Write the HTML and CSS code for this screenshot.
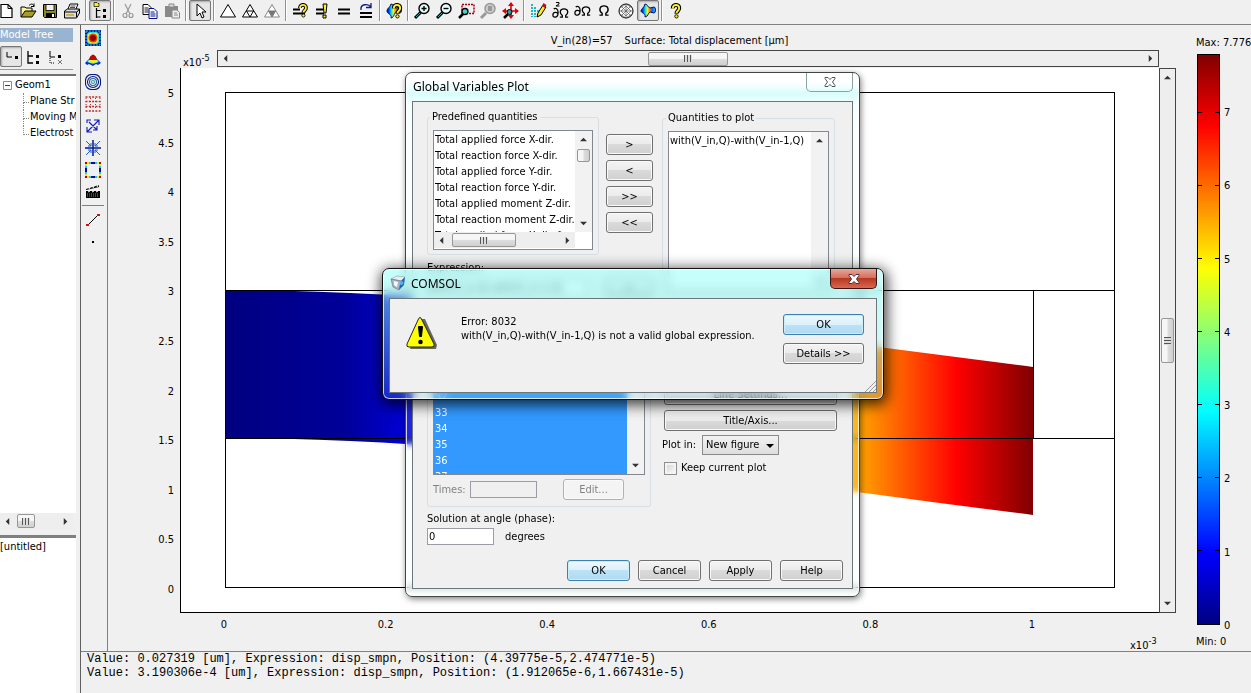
FILE: index.html
```html
<!DOCTYPE html>
<html lang="en">
<head>
<meta charset="utf-8">
<title>COMSOL Multiphysics</title>
<link rel="stylesheet" href="styles.css">
</head>
<body>
<svg class="defs" width="0" height="0" aria-hidden="true">
  <defs>
    <linearGradient id="jet-v" x1="0" y1="1" x2="0" y2="0">
      <stop offset="0" stop-color="#000080"/><stop offset=".125" stop-color="#0000ff"/><stop offset=".375" stop-color="#00ffff"/><stop offset=".625" stop-color="#ffff00"/><stop offset=".875" stop-color="#ff0000"/><stop offset="1" stop-color="#800000"/>
    </linearGradient>
    <linearGradient id="jet-beam">
      <stop offset="0" stop-color="#000080"/><stop offset=".15" stop-color="#00009a"/><stop offset=".275" stop-color="#0000ff"/><stop offset=".517" stop-color="#00ffff"/><stop offset=".717" stop-color="#ffff00"/><stop offset=".906" stop-color="#ff0000"/><stop offset="1" stop-color="#800000"/>
    </linearGradient>
    <linearGradient id="jet-blob">
      <stop offset="0" stop-color="#000090"/><stop offset=".15" stop-color="#0050ff"/><stop offset=".3" stop-color="#00e8ff"/><stop offset=".45" stop-color="#fff000"/><stop offset=".6" stop-color="#ff8000"/><stop offset=".75" stop-color="#0060ff"/><stop offset="1" stop-color="#40b0ff"/>
    </linearGradient>
    <symbol id="left" viewBox="0 0 8 8"><path d="M6 0v8L2 4z"/></symbol>
    <symbol id="right" viewBox="0 0 8 8"><path d="M2 0v8l4-4z"/></symbol>
    <symbol id="up" viewBox="0 0 8 8"><path d="M0 6h8L4 2z"/></symbol>
    <symbol id="down" viewBox="0 0 8 8"><path d="M0 2h8L4 6z"/></symbol>
    <symbol id="quest" viewBox="0 0 12 18"><path d="M2.500 6C2 1 10 1 9.500 6c0 3-3 3-3 6" fill="none" stroke="#000" stroke-width="4.600"/><path d="M2.500 6C2 1 10 1 9.500 6c0 3-3 3-3 5.500" fill="none" stroke="#ffee20" stroke-width="2.200"/><circle cx="6.500" cy="15" r="1.900" fill="#ffee20" stroke="#000"/></symbol>
    <symbol id="lens" viewBox="0 0 20 20"><circle cx="12" cy="7.500" r="5" fill="#e4ffff" stroke="#000" stroke-width="1.400"/><path d="M8.500 11.500L3 17" stroke="#000" stroke-width="3"/><path d="M8 12l-4 4" stroke="#3aa" stroke-width="1"/></symbol>
    <symbol id="omega" viewBox="0 0 12 12"><path d="M1 11h3V9C0 6 1 1 6 1s6 5 2 8v2h3" fill="none" stroke="#000" stroke-width="1.500"/></symbol>
    <symbol id="partial" viewBox="0 0 8 12"><path d="M2 2c2-2 5 0 5 4 0 7-6 6-6 3 0-4 5-4 6-1" fill="none" stroke="#000" stroke-width="1.400"/></symbol>
  </defs>
</svg>

<div class="app">
  <header class="toolbar" role="toolbar" aria-label="Main toolbar">
    <button class="tool" aria-label="New"><svg viewBox="0 0 20 20"><path d="M5 3.500h7l4 4v9H5z" fill="#fff" stroke="#000" stroke-width="1.200"/><path d="M12 3.500v4h4" fill="none" stroke="#000"/></svg></button>
    <button class="tool" aria-label="Open"><svg viewBox="0 0 20 20"><path d="M3 16V6h4l1 1h6v3" fill="#fff799" stroke="#000"/><path d="M3 16l4-6h11l-4 6z" fill="#a89c28" stroke="#000"/><path d="M11 4.500c2-2 4-2 5 1m0-3v3h-3" fill="none" stroke="#000"/></svg></button>
    <button class="tool" aria-label="Save"><svg viewBox="0 0 20 20"><path d="M3.500 3.500h13v13h-12l-1-1z" fill="#8a8620" stroke="#000"/><path d="M6 3.500h8v6H6z" fill="#f2f2f2" stroke="#000" stroke-width=".8"/><path d="M6 12h9v4.500H6z"/><path d="M12 13h2v3h-2z" fill="#fff"/></svg></button>
    <button class="tool" aria-label="Print"><svg viewBox="0 0 20 20"><path d="M6 8l2-5h8l-2 5" fill="#fff" stroke="#000"/><path d="M8.500 5h5M8 6.500h5" stroke="#000" stroke-width=".7"/><path d="M2.500 10l3-2h12v4l-3 5h-12z" fill="#ddd" stroke="#000"/><path d="M2.500 11h12v5M15 11l2.500-3" fill="none" stroke="#000"/><path d="M4 14h8" stroke="#bba820" stroke-width="1.500"/></svg></button>
    <span class="sep"></span>
    <button class="tool pressed" aria-label="Model tree" aria-pressed="true"><svg viewBox="0 0 20 20"><path d="M4 1.500h3l1 1h1v3H4z" fill="#ffee20" stroke="#000" stroke-width=".7"/><path d="M6.500 7v10M6.500 9.500h4M6.500 16h4" fill="none" stroke="#000" stroke-width="1.200"/><path d="M13 8h3v3h-3zM13 14h3v3h-3z"/></svg></button>
    <span class="sep"></span>
    <button class="tool" aria-label="Cut" disabled><svg viewBox="0 0 20 20" fill="none" stroke="#999" stroke-width="1.200"><path d="M7 3l5 10M13 3L8 13"/><circle cx="7" cy="14.500" r="2"/><circle cx="13" cy="14.500" r="2"/></svg></button>
    <button class="tool" aria-label="Copy"><svg viewBox="0 0 20 20"><path d="M3 3.500h5l3 3v7H3z" fill="#fff" stroke="#000"/><path d="M4.500 7h4M4.500 9h4M4.500 11h4" stroke="#222"/><path d="M9 7.500h5l3 3v7H9z" fill="#fff" stroke="#001090"/><path d="M10.500 11h4M10.500 13h5M10.500 15h5" stroke="#001090"/></svg></button>
    <button class="tool" aria-label="Paste" disabled><svg viewBox="0 0 20 20"><path d="M3 5h13v11H3z" fill="#888"/><path d="M7 3h5v3H7z" fill="#ddd" stroke="#888"/><path d="M10 9h5l2.500 2.500V17H10z" fill="#eee" stroke="#888"/><path d="M12 12h3M12 14h4" stroke="#888"/></svg></button>
    <span class="sep"></span>
    <button class="tool pressed" aria-label="Select" aria-pressed="true"><svg viewBox="0 0 20 20"><path d="M7 3v12l3-3 2 5 2-1-2-5h4z" fill="#fff" stroke="#000"/></svg></button>
    <span class="sep"></span>
    <button class="tool" aria-label="Initialize mesh"><svg viewBox="0 0 20 20"><path d="M10 3.500L17.500 16h-15z" fill="#fff" stroke="#000"/></svg></button>
    <button class="tool" aria-label="Refine mesh"><svg viewBox="0 0 20 20"><path d="M10 3.500L17.500 16h-15zM6.500 10h7L10 16z" fill="#fff" stroke="#000"/></svg></button>
    <button class="tool" aria-label="Refine selection"><svg viewBox="0 0 20 20"><path d="M10 3.500L17.500 16h-15z" fill="#fff" stroke="#888"/><path d="M6.500 10h7L10 16z" fill="#777" stroke="#777"/></svg></button>
    <span class="sep"></span>
    <button class="tool" aria-label="Solver parameters"><svg viewBox="0 0 20 20"><path d="M3 8.500h7M3 12.500h12" stroke="#000" stroke-width="2"/><use href="#quest" x="7" y="2" width="12" height="15"/></svg></button>
    <button class="tool" aria-label="Solve problem"><svg viewBox="0 0 20 20"><path d="M4 8.500h8M4 12.500h8" stroke="#000" stroke-width="2"/><path d="M11 3h4l-1 9h-2zM11 14h3v3h-3z" fill="#ffee20" stroke="#000"/></svg></button>
    <button class="tool" aria-label="Solve"><svg viewBox="0 0 20 20"><path d="M4 8.500h12M4 12.500h12" stroke="#000" stroke-width="1.800"/></svg></button>
    <button class="tool" aria-label="Restart"><svg viewBox="0 0 20 20"><path d="M4 12h12M4 16h12" stroke="#000" stroke-width="1.800"/><path d="M5 9c-1-6 7-7 10-3m0-4v4.500h-5" fill="none" stroke="#0a1a80" stroke-width="1.300"/></svg></button>
    <span class="sep"></span>
    <button class="tool" aria-label="Plot parameters"><svg viewBox="0 0 20 20"><path d="M7 3c3 0 2 3 5 4l4-1c2 0 2 6 0 6l-4-1c-2 1-2 6-5 6 1-4-4-4-4-7s3-3 4-7z" fill="url(#jet-blob)" stroke="#001060"/><use href="#quest" x="7" y="2" width="12" height="16"/></svg></button>
    <span class="sep"></span>
    <button class="tool" aria-label="Zoom in"><svg viewBox="0 0 20 20"><use href="#lens"/><path d="M9.500 7.500h5M12 5v5" stroke="#000" stroke-width="1.400"/></svg></button>
    <button class="tool" aria-label="Zoom out"><svg viewBox="0 0 20 20"><use href="#lens"/><path d="M9.500 7.500h5" stroke="#000" stroke-width="1.400"/></svg></button>
    <button class="tool" aria-label="Zoom window"><svg viewBox="0 0 20 20"><path d="M6 3.500h12v9H6z" fill="none" stroke="#a00010" stroke-width="1.500" stroke-dasharray="2 1"/><circle cx="9" cy="10.500" r="3" fill="#5cc" stroke="#000" stroke-width="1.300"/><path d="M7 13l-4 4" stroke="#000" stroke-width="2.500"/></svg></button>
    <button class="tool" aria-label="Zoom selected" disabled><svg viewBox="0 0 20 20"><circle cx="12" cy="7.500" r="5" fill="#ccc" stroke="#999" stroke-width="1.500"/><path d="M10 5h4v5h-4z" fill="#999"/><path d="M8 12l-5 5" stroke="#999" stroke-width="3"/></svg></button>
    <button class="tool" aria-label="Zoom extents"><svg viewBox="0 0 20 20"><path d="M11 2v15M3 10h15" stroke="#e00010" stroke-width="1.600"/><path d="M8 5l3-4 3 4zM8 14l3 4 3-4zM6 7l-4 3 4 3zM15 7l4 3-4 3z" fill="#e00010"/><circle cx="9.500" cy="11" r="2.500" fill="#399" stroke="#000"/><path d="M8 13l-4 4" stroke="#000" stroke-width="2.500"/></svg></button>
    <span class="sep"></span>
    <button class="tool" aria-label="Draw mode"><svg viewBox="0 0 20 20"><path d="M4 3v13M7 6v10M10 9v7" fill="none" stroke="#20b8c8" stroke-width="2" stroke-dasharray="2 1"/><path d="M9 16l1-4 5-8 3 2-5 8z" fill="#ffe820" stroke="#000"/><path d="M14 5l3 2 1.500-3-3-2z" fill="#c01010"/></svg></button>
    <button class="tool" aria-label="Point mode"><svg viewBox="0 0 20 20"><use href="#partial" x="2" y="6" width="7" height="11"/><use href="#omega" x="9" y="7" width="10" height="10"/><path d="M6 1.500h3v1.500L6 5h3.500" fill="none" stroke="#000"/></svg></button>
    <button class="tool" aria-label="Boundary mode"><svg viewBox="0 0 20 20"><use href="#partial" x="2" y="4" width="7" height="11"/><use href="#omega" x="9" y="5" width="10" height="10"/></svg></button>
    <button class="tool" aria-label="Subdomain mode"><svg viewBox="0 0 20 20"><use href="#omega" x="4" y="4" width="12" height="11"/></svg></button>
    <button class="tool" aria-label="Mesh mode"><svg viewBox="0 0 20 20"><circle cx="10" cy="10" r="7" fill="#fff" stroke="#000"/><path d="M3 10h14M10 3v14M5 5l10 10M15 5L5 15M4 7l6-4 6 4M4 13l6 4 6-4M10 5l5 5-5 5-5-5z" fill="none" stroke="#555" stroke-width=".7"/></svg></button>
    <button class="tool pressed" aria-label="Postprocessing mode" aria-pressed="true"><svg viewBox="0 0 20 20"><path d="M7 3c3 0 2 3 5 4l4-1c2 0 2 6 0 6l-4-1c-2 1-2 5-5 5 1-4-4-4-4-6s3-3 4-7z" fill="url(#jet-blob)" stroke="#001060"/></svg></button>
    <span class="sep"></span>
    <button class="tool" aria-label="Help"><svg viewBox="0 0 20 20"><use href="#quest" x="4" y="2" width="12" height="16"/></svg></button>
  </header>

  <div class="workspace">
    <aside class="sidebar">
      <h2 class="tree-title">Model Tree</h2>
      <div class="tree-tools">
        <button class="tool pressed" aria-label="Collapsed view" aria-pressed="true"><svg viewBox="0 0 20 20"><path d="M6 5v5h5" fill="none" stroke="#000"/><path d="M14 9h3v3h-3z"/></svg></button>
        <button class="tool" aria-label="Expanded view"><svg viewBox="0 0 20 20"><path d="M5 4v12h5M5 9h5" fill="none" stroke="#000" stroke-width="1.300"/><path d="M13 8h3v3h-3zM13 14h3v3h-3z"/></svg></button>
        <button class="tool" aria-label="Inspect view"><svg viewBox="0 0 20 20"><path d="M5 4v6h5" fill="none" stroke="#000"/><path d="M5 11v5h5" fill="none" stroke="#000" stroke-dasharray="1 1"/><path d="M13 8h3v3h-3z"/><path d="M13 13l4 4m0-4l-4 4" stroke="#777"/></svg></button>
      </div>
      <div class="tree">
        <div class="tree-root"><svg class="minus" viewBox="0 0 9 9"><path d="M.500.500h8v8h-8z" fill="#fff" stroke="#8c8c8c"/><path d="M2 4.500h5" stroke="#2040a0"/></svg>Geom1</div>
        <ul class="branch"><li>Plane Str</li><li>Moving M</li><li>Electrost</li></ul>
      </div>
      <div class="bar-h side-scroll"><svg class="arrow"><use href="#left"/></svg><span class="thumb"><i class="grip"></i></span><span class="fill"></span><svg class="arrow"><use href="#right"/></svg></div>
      <div class="details">[untitled]</div>
    </aside>

    <nav class="strip" aria-label="Plot types">
      <button class="plot-tool" aria-label="Surface plot"><svg viewBox="0 0 16 16"><path d="M0 0h16v16H0z" fill="#001890"/><path d="M1 1h14v14H1z" fill="none" stroke="#28c8f0" stroke-dasharray="2 1"/><rect x="2" y="2" width="12" height="12" rx="3" fill="#40e0c0"/><rect x="3" y="3" width="10" height="10" rx="3" fill="#f8f020"/><circle cx="8" cy="8" r="4.500" fill="#f04000"/><circle cx="8" cy="8" r="3" fill="#900000"/></svg></button>
      <button class="plot-tool" aria-label="3D surface plot"><svg viewBox="0 0 16 16"><path d="M0 11l4-4 2-3h4l2 3 4 4-3 2-2-1-3 2-4-2-2 1z" fill="#0030d0"/><path d="M2 10l3-4h6l3 4-6 2z" fill="#20d8f0"/><path d="M4 8h8l1 2-5 1-5-1z" fill="#f8f020"/><path d="M5 5q3-5 6 0l1 3H4z" fill="#c80000"/></svg></button>
      <button class="plot-tool" aria-label="Contour plot"><svg viewBox="0 0 16 16" fill="none" stroke="#001880" stroke-width="1.100"><rect x=".5" y=".5" width="15" height="15" rx="6"/><circle cx="8" cy="8" r="5.500"/><circle cx="8" cy="8" r="3.500" stroke="#2860a8"/><circle cx="8" cy="8" r="1.500" stroke="#30a0a0"/></svg></button>
      <button class="plot-tool" aria-label="Boundary plot"><svg viewBox="0 0 16 16" fill="none" stroke="#b82828"><path d="M.5 1h15M.5 5.500h15M.5 10.500h15M.5 15h15" stroke-dasharray="2 1.300" stroke-width="1.400"/><path d="M1 2v12M5.500 2v12M10.500 2v12M15 2v12" stroke-dasharray="1 2"/></svg></button>
      <button class="plot-tool" aria-label="Arrow plot"><svg viewBox="0 0 16 16" fill="none" stroke="#1018c0" stroke-width="1.100"><path d="M2 14L14 2M4 4l8 8M9 2h5v5M2 9v5h5M2 5V2h4M12 8v4H8"/></svg></button>
      <button class="plot-tool" aria-label="Principal plot"><svg viewBox="0 0 16 16" fill="none" stroke="#001890"><path d="M8 0v16M0 8h16" stroke-width="1.500"/><path d="M1 1l5 5M15 1l-5 5M1 15l5-5M15 15l-5-5M6 3v3H3M10 3v3h3M6 13v-3H3M10 13v-3h3" stroke="#2058d8"/></svg></button>
      <button class="plot-tool" aria-label="Edge plot"><svg viewBox="0 0 16 16" fill="none" stroke-width="2"><path d="M1 1h14v14H1z" stroke="#f0e820"/><path d="M4 1h8M4 15h8M1 4v8M15 4v8" stroke="#20c8f0"/><path d="M6 1h4M6 15h4M1 6v4M15 6v4" stroke="#001090"/><path d="M0 1h2M14 1h2M0 15h2M14 15h2" stroke="#c00000"/></svg></button>
      <button class="plot-tool" aria-label="Animate"><svg viewBox="0 0 16 16"><path d="M1 7h14v7H1zM1 5l13-4v2L1 6z"/><path d="M3 8l2-1M7 8l2-1M11 8l2-1M4 5l1-2M8 4l1-2M12 3l1-2" stroke="#fff"/><path d="M2 10h12M2 12h12" stroke="#888" stroke-dasharray="1 1"/></svg></button>
      <hr class="strip-line">
      <button class="plot-tool" aria-label="Line probe"><svg viewBox="0 0 16 16"><path d="M3 13L13 3" stroke="#000"/><path d="M1 12h3v2H1zM12 2h3v2h-3z" fill="#d01010"/></svg></button>
      <button class="plot-tool" aria-label="Point probe"><svg viewBox="0 0 16 16"><path d="M7 7h2v2H7z"/></svg></button>
    </nav>

    <main class="plot">
      <div class="plot-title"><span>V_in(28)=57</span><span>Surface: Total displacement [µm]</span></div>
      <div class="top-row">
        <span class="exponent">x10<sup>-5</sup></span>
        <div class="bar-h framed"><svg class="arrow"><use href="#left"/></svg><span class="fill"></span><span class="thumb wide"><i class="grip"></i></span><span class="fill"></span><svg class="arrow"><use href="#right"/></svg></div>
      </div>
      <div class="y-axis"><span>5</span><span>4.5</span><span>4</span><span>3.5</span><span>3</span><span>2.5</span><span>2</span><span>1.5</span><span>1</span><span>0.5</span><span>0</span></div>
      <div class="canvas">
        <svg viewBox="0 0 978 544" preserveAspectRatio="none" role="img" aria-label="Total displacement of the beam">
          <path d="M44 222C313 222 583 265 852 299V447C583 413 313 370 44 370z" fill="url(#jet-beam)"/>
          <g fill="none" stroke="#000" shape-rendering="crispEdges"><path d="M44.500 24.500h889v495h-889zM44 222.500h889M44 370.500h889M852.500 222v148"/></g>
        </svg>
      </div>
      <div class="bar-v framed"><svg class="arrow"><use href="#up"/></svg><span class="fill"></span><span class="thumb"><i class="grip"></i></span><span class="fill"></span><svg class="arrow"><use href="#down"/></svg></div>
      <div class="x-axis">
        <div class="x-ticks"><span>0</span><span>0.2</span><span>0.4</span><span>0.6</span><span>0.8</span><span>1</span></div>
        <span class="exponent">x10<sup>-3</sup></span>
      </div>
      <div class="legend">
        <span class="range">Max: 7.776</span>
        <div class="scale">
          <svg viewBox="0 0 23 571" preserveAspectRatio="none" shape-rendering="crispEdges"><rect x=".5" y=".5" width="22" height="570" fill="url(#jet-v)" stroke="#000"/><path d="M0 58.500h5m13 0h5M0 131.500h5m13 0h5M0 204.500h5m13 0h5M0 277.500h5m13 0h5M0 350.500h5m13 0h5M0 423.500h5m13 0h5M0 496.500h5m13 0h5" stroke="#000"/></svg>
          <div class="scale-ticks"><span>7</span><span>6</span><span>5</span><span>4</span><span>3</span><span>2</span><span>1</span><span>0</span></div>
        </div>
        <span class="range">Min: 0</span>
      </div>
    </main>

    <footer class="log">
      <p>Value: 0.027319 [um], Expression: disp_smpn, Position: (4.39775e-5,2.474771e-5)</p>
      <p>Value: 3.190306e-4 [um], Expression: disp_smpn, Position: (1.912065e-6,1.667431e-5)</p>
    </footer>
  </div>
</div>

<section class="window plot-window" role="dialog" aria-labelledby="plot-window-title">
  <div class="caption"><h2 id="plot-window-title">Global Variables Plot</h2><button class="close" aria-label="Close"><svg viewBox="0 0 12 10"><path d="M1 .5h3l2 2 2-2h3v1L8.500 5 11 8.500v1H8l-2-2-2 2H1v-1L3.500 5 1 1.500z" fill="#fff" stroke="#4a5560"/></svg></button></div>
  <div class="client">
    <div class="columns">
      <div class="col-left">
        <div class="pick">
          <fieldset class="group"><legend>Predefined quantities</legend>
            <div class="listbox quantities">
              <ul><li>Total applied force X-dir.</li><li>Total reaction force X-dir.</li><li>Total applied force Y-dir.</li><li>Total reaction force Y-dir.</li><li>Total applied moment Z-dir.</li><li>Total reaction moment Z-dir.</li><li>Total applied force X-dir. fo</li></ul>
              <div class="bar-v"><svg class="arrow"><use href="#up"/></svg><span class="thumb small"></span><span class="fill"></span><svg class="arrow"><use href="#down"/></svg></div>
              <div class="bar-h"><svg class="arrow"><use href="#left"/></svg><span class="thumb mid"><i class="grip"></i></span><span class="fill"></span><svg class="arrow"><use href="#right"/></svg></div>
            </div>
          </fieldset>
          <div class="moves"><button class="btn">&gt;</button><button class="btn">&lt;</button><button class="btn">&gt;&gt;</button><button class="btn">&lt;&lt;</button></div>
        </div>
        <label class="expr-label" for="expr">Expression:</label>
        <div class="expr-row"><input id="expr" class="field" type="text" value="with(V_in,Q)-with(V_in-1,Q)"><button class="btn">&gt;</button></div>
        <fieldset class="group solutions">
          <div class="listbox"><ul><li>29</li><li>30</li><li>31</li><li>32</li><li>33</li><li>34</li><li>35</li><li>36</li><li>37</li></ul>
            <div class="bar-v"><svg class="arrow"><use href="#up"/></svg><span class="fill"></span><svg class="arrow"><use href="#down"/></svg></div></div>
          <div class="times"><label for="times">Times:</label><input id="times" class="field" type="text" disabled><button class="btn" disabled>Edit...</button></div>
        </fieldset>
        <label class="phase-label" for="phase">Solution at angle (phase):</label>
        <div class="phase-row"><input id="phase" class="field" type="text" value="0"><span>degrees</span></div>
      </div>
      <div class="col-right">
        <fieldset class="group"><legend>Quantities to plot</legend>
          <div class="listbox chosen"><ul><li>with(V_in,Q)-with(V_in-1,Q)</li></ul><div class="bar-v"><svg class="arrow"><use href="#up"/></svg><span class="fill"></span><svg class="arrow"><use href="#down"/></svg></div></div>
        </fieldset>
        <div class="settings"><button class="btn">Line Settings...</button><button class="btn">Title/Axis...</button></div>
        <div class="plot-in"><label for="plot-in">Plot in:</label><span class="combo"><select id="plot-in"><option>New figure</option></select><svg><use href="#down"/></svg></span></div>
        <label class="keep"><input type="checkbox">Keep current plot</label>
      </div>
    </div>
    <div class="actions"><button class="btn default">OK</button><button class="btn">Cancel</button><button class="btn">Apply</button><button class="btn">Help</button></div>
  </div>
</section>

<section class="window error-window" role="alertdialog" aria-labelledby="error-title">
  <div class="caption">
    <svg class="cube" viewBox="0 0 16 16"><path d="M1 4l6-3 8 1-4 4z" fill="#e8eef4" stroke="#8898a8" stroke-width=".6"/><path d="M1 4l10 2-2 9-6-3z" fill="#a8b4c4" stroke="#667" stroke-width=".6"/><path d="M11 6l4-4-1 8-5 5z" fill="#2860a8"/><path d="M4 6l4 1-1 5-3-2z" fill="#f4f8ff"/><circle cx="11.500" cy="8" r="2" fill="#4cb0f0"/></svg>
    <h2 id="error-title">COMSOL</h2><button class="close" aria-label="Close"><svg viewBox="0 0 12 10"><path d="M1 .5h3l2 2 2-2h3v1L8.500 5 11 8.500v1H8l-2-2-2 2H1v-1L3.500 5 1 1.500z" fill="#fff" stroke="#503038"/></svg></button>
  </div>
  <div class="client">
    <svg class="warning" viewBox="0 0 32 32"><path d="M15 2h4l12 26-1 4H4z" fill="#666"/><path d="M12 3q2-5 4 0l12 24q1 3-2 3H3q-3 0-2-3z" fill="#ffff00" stroke="#222" stroke-width="1"/><path d="M12.500 9.500h4l-1 10h-2z" stroke="#000" stroke-linejoin="round"/><circle cx="14.500" cy="25" r="2.300"/></svg>
    <p class="message">Error: 8032<br>with(V_in,Q)-with(V_in-1,Q) is not a valid global expression.</p>
    <div class="answers"><button class="btn default">OK</button><button class="btn">Details &gt;&gt;</button></div>
    <svg class="resize" viewBox="0 0 12 12"><path d="M1 12L12 1M5 12l7-7M9 12l3-3" stroke="#999"/></svg>
  </div>
</section>
</body>
</html>
```

FILE: styles.css
```css
* { box-sizing: border-box; }

body {
  margin: 0;
  overflow: hidden;
  background: #f0f0f0;
  color: #000;
  font: 11px/14px "DejaVu Sans Condensed", "Noto Sans", sans-serif;
}

button, input, select { font: inherit; color: inherit; margin: 0; padding: 0; }
ul { list-style: none; margin: 0; padding: 0; }
p, h2 { margin: 0; font: inherit; }
svg { display: block; }
.defs { position: absolute; }

.app { display: flex; flex-direction: column; height: 100vh; }

/* Toolbar */
.toolbar {
  display: flex;
  height: 25px;
  margin-left: -5px;
  border-bottom: 1px solid #808080;
}
.tool {
  flex: none;
  width: 22px;
  height: 21px;
  border: 1px solid transparent;
  background: none;
}
.tool svg { width: 20px; height: 20px; }
.tool.pressed { border-color: #777; border-radius: 2px; background: #e6e6e6; box-shadow: inset 1px 1px 2px #aaa; }
.sep { flex: none; width: 2px; height: 21px; margin: 0 2px; border-left: 1px solid #909090; border-right: 1px solid #fff; }

/* Workspace */
.workspace {
  flex: 1;
  min-height: 0;
  display: grid;
  grid-template-columns: 81px 27px 1fr;
  grid-template-rows: 1fr 42px;
}
.sidebar {
  grid-row: 1 / 3;
  display: flex;
  flex-direction: column;
  min-width: 0;
  padding-right: 4px;
  border-right: 1px solid #606060;
}
.tree-title {
  margin: 3px 3px 0 0;
  height: 14px;
  background: #99b4d1;
  color: #fff;
  white-space: nowrap;
}
.tree-tools { display: flex; height: 28px; padding-top: 4px; margin-right: 3px; border-bottom: 1px solid #999; }
.tree { flex: 1; margin-top: 4px; padding-top: 1px; border-top: 2px solid #707070; background: #fff; overflow: hidden; white-space: nowrap; }
.tree-root { display: flex; align-items: center; gap: 3px; height: 16px; padding-left: 3px; }
.minus { width: 9px; height: 9px; }
.branch { margin-left: 23px; }
.branch li { position: relative; height: 16px; line-height: 16px; padding-left: 7px; }
.branch li::before { content: ""; position: absolute; left: 0; top: 0; width: 5px; height: 9px; border-left: 1px dotted #888; border-bottom: 1px dotted #888; }
.branch li:not(:last-child)::after { content: ""; position: absolute; left: 0; top: 9px; height: 8px; border-left: 1px dotted #888; }
.side-scroll { height: 16px; margin-right: 3px; }
.details { height: 158px; margin-top: 6px; padding-top: 2px; border-top: 3px solid #808080; background: #fff; }

.strip {
  display: flex;
  flex-direction: column;
  align-items: center;
  padding: 2px 2px 0 0;
  border-right: 1px solid #808080;
}
.plot-tool { width: 22px; height: 22px; padding: 3px 2px; border: 0; background: none; }
.plot-tool svg { width: 16px; height: 16px; margin: auto; }
.strip-line { width: 22px; margin: 2px 0 3px; border: 0; border-top: 1px solid #808080; }

/* Scroll bars */
.bar-h, .bar-v { display: flex; align-items: center; background: #eee; }
.bar-v { flex-direction: column; width: 17px; }
.bar-h { height: 16px; padding: 0 4px; }
.bar-v { padding: 5px 0; }
.framed { border: 1px solid #444; }
.arrow { flex: none; width: 7px; height: 7px; fill: #333; }
.fill { flex: 1; }
.thumb {
  flex: none;
  display: grid;
  place-items: center;
  border: 1px solid #979797;
  border-radius: 2px;
}
.bar-h .thumb { width: 18px; height: 14px; background: linear-gradient(#f6f6f6 45%, #dcdcdc 55%, #d0d0d0); }
.bar-v .thumb { width: 13px; height: 45px; background: linear-gradient(90deg, #f6f6f6 45%, #dcdcdc 55%, #d0d0d0); }
.bar-h .thumb.wide { width: 80px; }
.bar-h .thumb.mid { width: 64px; margin-left: 7px; }
.bar-v .thumb.small { height: 13px; margin-top: 6px; }
.side-scroll .thumb { margin-left: 6px; }
.grip { width: 8px; height: 7px; background: repeating-linear-gradient(90deg, #555 0 1px, #ddd 1px 3px); }
.bar-v .grip { width: 7px; height: 8px; background: repeating-linear-gradient(#555 0 1px, #ddd 1px 3px); }

/* Plot area */
.plot {
  display: grid;
  min-width: 0;
  overflow: hidden;
  grid-template-columns: 72px 1fr 17px 75px;
  grid-template-rows: 25px 18px 1fr 38px;
}
.plot-title { grid-area: 1 / 2; display: flex; justify-content: center; gap: 12px; padding-top: 9px; white-space: nowrap; }
.top-row { grid-area: 2 / 2; display: flex; gap: 8px; }
.top-row .bar-h { flex: 1; height: 17px; }
.exponent { width: 29px; padding: 6px 0 0 3px; white-space: nowrap; }
.exponent sup { font-size: 9px; line-height: 0; vertical-align: 5px; }
.y-axis { grid-area: 3 / 1; display: flex; flex-direction: column; justify-content: space-between; align-items: flex-end; padding: 19px 6px 16px 0; }
.canvas { grid-area: 3 / 2; min-height: 0; border: 1px solid #000; border-width: 0 0 1px 1px; background: #fff; }
.canvas svg { width: 100%; height: 100%; }
.plot > .bar-v { grid-area: 3 / 3; }
.x-axis { grid-area: 4 / 2; display: flex; flex-direction: column; padding-top: 5px; }
.x-ticks { display: flex; justify-content: space-between; margin: 0 112px 0 29px; }
.x-ticks span { width: 30px; text-align: center; }
.x-axis .exponent { align-self: flex-end; padding: 7px 0 0; }
.legend { grid-area: 1 / 4 / 5 / 5; display: flex; flex-direction: column; gap: 4px; padding: 11px 0 2px 20px; white-space: nowrap; }
.scale { flex: 1; display: flex; gap: 4px; min-height: 0; margin: 0 0 6px 1px; }
.scale svg { width: 23px; height: 100%; }
.scale-ticks { display: flex; flex-direction: column; justify-content: space-between; margin: 52px 0 -8px; }

.log {
  grid-column: 2 / 4;
  padding: 0 0 0 6px;
  border-top: 1px solid #808080;
  font: 12px/14px "Liberation Mono", monospace;
  white-space: nowrap;
}

/* Windows */
.window { position: absolute; border: 1px solid #444; border-radius: 7px; }
.window > .client { border: 1px solid #6c7676; background: #f0f0f0; }
.caption { display: flex; font: 12px/16px "Noto Sans", sans-serif; }
.caption h2 { flex: 1; }
.close { display: grid; place-items: center; width: 47px; border: 1px solid #8ca0a0; border-top: 0; border-radius: 0 0 5px 5px; background: none; }
.close svg { width: 12px; height: 10px; }

.btn {
  height: 21px;
  border: 1px solid #707070;
  border-radius: 3px;
  background: linear-gradient(#f3f3f3, #ebebeb 50%, #dadada 50%, #d0d0d0);
  box-shadow: inset 0 0 0 1px #fafafa;
}
.btn.default { border-color: #3c7fb1; background: linear-gradient(#eef8fd, #dcf0fa 50%, #bce2f6 50%, #b0daf2); box-shadow: inset 0 0 0 1px #c8f0fc; }
.btn:disabled { border-color: #adb2b5; background: #f4f4f4; color: #838383; }
.field { width: 67px; height: 17px; padding: 0 1px; border: 1px solid #9a9ea4; background: #fff; }
.field:disabled { background: #f0f0f0; }

.plot-window {
  left: 405px;
  top: 72px;
  width: 455px;
  padding: 0 6px 7px;
  background: linear-gradient(rgba(255, 255, 255, .9) 8px, rgba(215, 255, 255, .9) 22px, rgba(240, 255, 255, .9) 30px, rgba(225, 255, 255, .15) 50px);
  backdrop-filter: blur(3px);
  box-shadow: inset 0 0 0 1px rgba(255, 255, 255, .8), 1px 2px 6px rgba(0, 0, 0, .5);
}
.plot-window .caption { height: 28px; padding-left: 1px; }
.plot-window .caption h2 { padding-top: 6px; }
.plot-window .close { height: 19px; }
.plot-window .client { padding: 8px 9px 7px 14px; }

.columns { display: flex; gap: 9px; }
.col-left { width: 226px; }
.col-right { flex: 1; padding-top: 1px; margin-right: -3px; }
.group { margin: 0; padding: 6px 5px 4px; border: 1px solid #d5dfe5; border-radius: 3px; min-width: 0; }
.group legend { padding: 0 2px; margin-left: -3px; height: 14px; }
.listbox { display: grid; grid-template-columns: 1fr 17px; border: 1px solid #828790; background: #fff; overflow: hidden; }
.listbox ul { min-width: 0; padding-top: 1px; overflow: hidden; white-space: nowrap; }
.listbox li { height: 16px; line-height: 16px; padding-left: 1px; }
.listbox .bar-v { background: #f2f2f2; }
.quantities { grid-template-rows: 101px 17px; width: 160px; height: 120px; }
.quantities .bar-h { grid-column: 1; }
.pick { display: flex; gap: 7px; }
.pick .group { width: 172px; }
.moves { display: flex; flex-direction: column; gap: 5px; padding-top: 24px; }
.moves .btn { width: 47px; }
.expr-label { display: block; margin-top: 6px; }
.expr-row { display: flex; align-items: center; justify-content: space-between; margin-top: 2px; }
.expr-row .field { width: 160px; }
.expr-row .btn { width: 47px; }
.solutions { width: 224px; margin-top: 7px; padding: 33px 5px 6px; }
.solutions .listbox { width: 212px; height: 136px; }
.solutions ul { background: #3399ff; color: #fff; }
.times { display: flex; align-items: center; margin-top: 4px; color: #838383; }
.times label { width: 37px; }
.times .btn { width: 61px; margin-left: 26px; }
.phase-label { display: block; margin: 5px 0 2px; }
.phase-row { display: flex; align-items: center; gap: 11px; }

.col-right .group { width: 173px; }
.col-right legend { margin-left: -2px; }
.chosen { width: 161px; height: 160px; }
.settings { display: flex; flex-direction: column; gap: 5px; width: 173px; margin: 88px 0 4px 2px; }
.plot-in { display: flex; align-items: center; gap: 7px; }
.plot-in label { width: 33px; white-space: nowrap; }
.combo { position: relative; width: 77px; height: 20px; }
.combo select { width: 100%; height: 100%; padding-left: 3px; appearance: none; border: 1px solid #8a8a8a; border-radius: 0; background: linear-gradient(#f2f2f2, #dedede); }
.combo svg { position: absolute; right: 5px; top: 7px; width: 8px; height: 8px; pointer-events: none; }
.keep { display: flex; align-items: center; gap: 4px; margin: 6px 0 0 2px; }
.keep input { width: 13px; height: 13px; appearance: none; border: 1px solid #8e8f8f; background: linear-gradient(135deg, #ccd0d4, #fff); box-shadow: inset 0 0 0 2px #f4f4f4; }
.actions { display: flex; justify-content: flex-end; gap: 8px; margin-top: 15px; }
.actions .btn { width: 63px; }

.error-window {
  left: 382px;
  top: 268px;
  width: 502px;
  padding: 0 6px 6px;
  border-color: #111;
  background: linear-gradient(rgba(160, 255, 250, .6), rgba(140, 245, 240, .5) 40px, rgba(120, 200, 220, .2));
  backdrop-filter: blur(4px);
  box-shadow: inset 0 0 0 1px rgba(255, 255, 255, .75), 1px 3px 14px 2px rgba(0, 0, 0, .75);
}
.error-window .caption { height: 29px; gap: 5px; padding-left: 1px; }
.error-window .caption h2 { padding-top: 7px; }
.cube { width: 16px; height: 16px; margin-top: 6px; }
.error-window .close { height: 20px; border-color: #3c1414; background: linear-gradient(#e8a898, #d47060 45%, #b83820 50%, #d86850); }
.error-window .client { position: relative; display: flex; padding: 15px 12px 28px 16px; }
.warning { width: 32px; height: 32px; margin: 3px 23px 0 0; }
.message { flex: 1; padding-top: 1px; white-space: nowrap; }
.answers { display: flex; flex-direction: column; gap: 8px; }
.answers .btn { width: 81px; }
.resize { position: absolute; right: 0; bottom: 0; width: 12px; height: 12px; }
```
